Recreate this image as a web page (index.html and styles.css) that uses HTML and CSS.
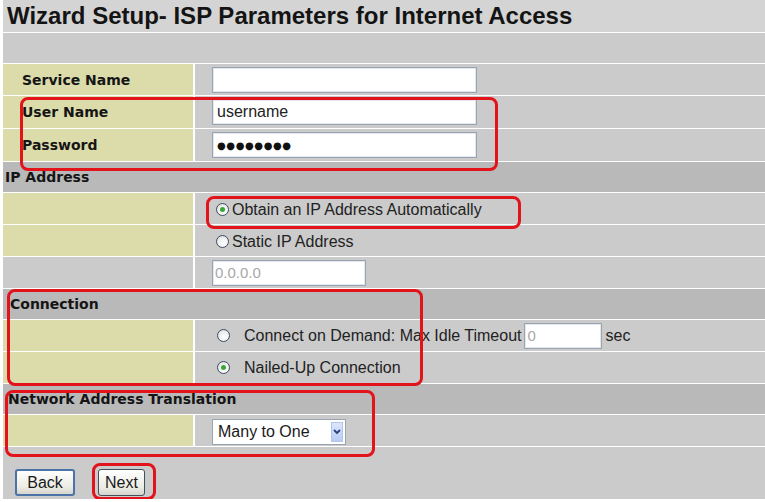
FILE: index.html
```html
<!DOCTYPE html>
<html>
<head>
<meta charset="utf-8">
<link rel="stylesheet" href="styles.css">
</head>
<body>
<div class="page">
  <div class="title">Wizard Setup- ISP Parameters for Internet Access</div>
  <div class="blank"></div>

  <div class="row">
    <div class="label">Service Name</div>
    <div class="value"><span class="field field-wide"></span></div>
  </div>
  <div class="row row-tall">
    <div class="label">User Name</div>
    <div class="value"><span class="field field-wide">username</span></div>
  </div>
  <div class="row row-tall">
    <div class="label">Password</div>
    <div class="value"><span class="field field-wide field-pass">●●●●●●●●</span></div>
  </div>

  <div class="hdr hdr-ip">IP Address</div>
  <div class="row">
    <div class="label"></div>
    <div class="value"><span class="opt"><span class="radio checked"></span>Obtain an IP Address Automatically</span></div>
  </div>
  <div class="row">
    <div class="label"></div>
    <div class="value"><span class="opt"><span class="radio"></span>Static IP Address</span></div>
  </div>
  <div class="row">
    <div class="label label-plain"></div>
    <div class="value"><span class="field field-ip muted">0.0.0.0</span></div>
  </div>

  <div class="hdr">Connection</div>
  <div class="row">
    <div class="label"></div>
    <div class="value"><span class="opt opt-wide"><span class="radio"></span>Connect on Demand: Max Idle Timeout</span><span class="field field-time muted">0</span><span class="unit">sec</span></div>
  </div>
  <div class="row">
    <div class="label"></div>
    <div class="value"><span class="opt opt-wide"><span class="radio checked"></span>Nailed-Up Connection</span></div>
  </div>

  <div class="hdr hdr-nat">Network Address Translation</div>
  <div class="row">
    <div class="label"></div>
    <div class="value"><span class="select">Many to One<span class="select-btn"><svg width="8" height="6" viewBox="0 0 8 6"><path d="M1 1 L4 4 L7 1" fill="none" stroke="#2a3f7a" stroke-width="1.8"/></svg></span></span></div>
  </div>

  <div class="actions">
    <span class="btn btn-back">Back</span>
    <span class="btn btn-next">Next</span>
  </div>

  <div class="mark mark-user"></div>
  <div class="mark mark-obtain"></div>
  <div class="mark mark-conn"></div>
  <div class="mark mark-nat"></div>
  <div class="mark mark-next"></div>
</div>
</body>
</html>
```

FILE: styles.css
```css
body {
  margin: 0;
  background: #ffffff;
  font-family: "Liberation Sans", Arial, sans-serif;
  color: #1a1a1a;
}

.page {
  position: relative;
  margin-left: 3px;
  width: 762px;
  display: flex;
  flex-direction: column;
  gap: 1px;
  background: #ffffff;
}

.title {
  height: 32px;
  background: #d4d4d4;
  padding-left: 4px;
  display: flex;
  align-items: center;
  font-weight: bold;
  font-size: 24px;
  color: #141414;
}

.blank {
  height: 30px;
  background: #cbcbcb;
}

.row {
  height: 31px;
  display: grid;
  grid-template-columns: 190px 1fr;
  column-gap: 2px;
}

.row-tall {
  height: 32px;
}

.label {
  background: #dcdbaa;
  padding-left: 19px;
  display: flex;
  align-items: center;
  font-family: "DejaVu Sans", sans-serif;
  font-weight: bold;
  font-size: 14px;
  color: #151515;
}

.label-plain {
  background: #cbcbcb;
}

.value {
  background: #cbcbcb;
  padding-left: 17px;
  display: flex;
  align-items: center;
  font-size: 16px;
  color: #222;
}

.hdr {
  height: 30px;
  background: #b9b9b9;
  padding-left: 7px;
  display: flex;
  align-items: center;
  font-family: "DejaVu Sans", sans-serif;
  font-weight: bold;
  font-size: 14px;
  color: #151515;
}

.hdr-ip {
  padding-left: 2px;
}

.hdr-nat {
  padding-left: 5px;
}

.field {
  box-sizing: border-box;
  height: 26px;
  background: #ffffff;
  border: 1px solid #98a4b1;
  box-shadow: inset 0 0 0 1px #e4e8ec;
  padding-left: 4px;
  display: flex;
  align-items: center;
  font-size: 16px;
  color: #222;
}

.field-wide {
  width: 265px;
}

.field-pass {
  font-family: "DejaVu Sans", sans-serif;
  font-size: 10px;
  letter-spacing: 0.6px;
  color: #111;
}

.field-ip {
  width: 154px;
  padding-left: 2px;
  font-size: 15px;
}

.field-time {
  width: 78px;
  margin-left: 3px;
  padding-left: 2px;
  font-size: 15px;
}

.muted {
  color: #a8a8a8;
}

.unit {
  margin-left: 3px;
}

.opt {
  display: flex;
  align-items: center;
  gap: 3px;
  padding-left: 4px;
  padding-top: 2px;
}

.opt-wide {
  gap: 14px;
  padding-left: 5px;
  padding-top: 0;
}

.radio {
  box-sizing: border-box;
  width: 13px;
  height: 13px;
  border-radius: 50%;
  border: 1px solid #3d4d60;
  background: radial-gradient(circle at 60% 65%, #ffffff 0, #f2f2f2 45%, #cfd3d8 100%);
  display: flex;
  align-items: center;
  justify-content: center;
}

.radio.checked::after {
  content: "";
  width: 5px;
  height: 5px;
  border-radius: 50%;
  background: #3aa63a;
}

.select {
  box-sizing: border-box;
  width: 134px;
  height: 26px;
  margin-top: 3px;
  background: #ffffff;
  border: 1px solid #98a4b1;
  padding-left: 5px;
  padding-right: 2px;
  display: flex;
  align-items: center;
  justify-content: space-between;
  font-size: 16px;
  color: #1a1a1a;
}

.select-btn {
  box-sizing: border-box;
  width: 12px;
  height: 20px;
  background: linear-gradient(#dbe6fb, #b8cdf5);
  border: 1px solid #b3c4e6;
  display: flex;
  align-items: center;
  justify-content: center;
}

.actions {
  height: 52px;
  background: #cbcbcb;
  padding: 22px 0 0 12px;
  box-sizing: border-box;
  display: flex;
  align-items: flex-start;
  gap: 23px;
}

.btn {
  box-sizing: border-box;
  height: 27px;
  border-radius: 3px;
  background: linear-gradient(#ffffff, #ecebe4 70%, #d6d4cc);
  display: flex;
  align-items: center;
  justify-content: center;
  font-size: 16px;
  color: #1a1a1a;
}

.btn-back {
  width: 60px;
  border: 2px solid #4a73a8;
}

.btn-next {
  width: 47px;
  border: 1px solid #44505c;
}

.mark {
  position: absolute;
  box-sizing: border-box;
  border: 3px solid #e2131b;
  border-radius: 8px;
}

.mark-user {
  left: 17px;
  top: 97px;
  width: 478px;
  height: 74px;
}

.mark-obtain {
  left: 203px;
  top: 196px;
  width: 315px;
  height: 33px;
}

.mark-conn {
  left: 4px;
  top: 289px;
  width: 416px;
  height: 97px;
}

.mark-nat {
  left: 2px;
  top: 390px;
  width: 370px;
  height: 67px;
}

.mark-next {
  left: 89px;
  top: 463px;
  width: 64px;
  height: 37px;
}
```
